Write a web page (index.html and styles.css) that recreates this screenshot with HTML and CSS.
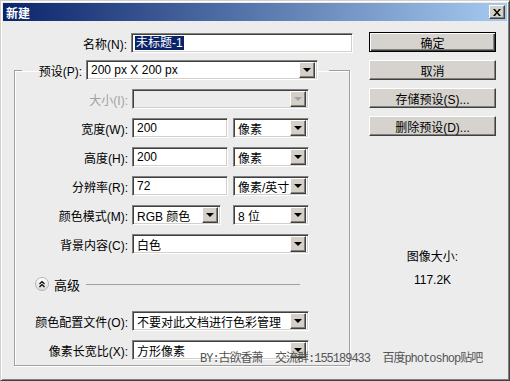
FILE: index.html
```html
<!DOCTYPE html>
<html lang="zh-CN">
<head>
  <meta charset="UTF-8">
  <title>新建</title>
  <link rel="stylesheet" href="styles.css">
</head>
<body>

  <div class="window">
    <!-- 标题栏 -->
    <div class="titlebar">
      <span class="title">新建</span>
      <span class="close">
        <svg width="8" height="7" viewBox="0 0 8 7"><path d="M0 0h2l2 2.5 2-2.5h2l-3 3.5 3 3.5h-2l-2-2.5-2 2.5h-2l3-3.5z" fill="#000"/></svg>
      </span>
    </div>

    <div class="dialog">
      <div class="main">
        <div class="row name-row">
          <label class="lbl">名称(N):</label>
          <div class="field w-name"><span class="sel">未标题-1</span></div>
        </div>

        <fieldset class="group">
          <legend>
            <label class="lbl lbl-preset">预设(P):</label>
            <div class="field select w-preset"><span class="val">200 px X 200 px</span><span class="drop"></span></div>
          </legend>

          <div class="rows">
            <div class="row">
              <label class="lbl disabled">大小(I):</label>
              <div class="field select off w-full"><span class="val"></span><span class="drop"></span></div>
            </div>
            <div class="row">
              <label class="lbl">宽度(W):</label>
              <div class="field w-num"><span class="val">200</span></div>
              <div class="field select w-unit"><span class="val">像素</span><span class="drop"></span></div>
            </div>
            <div class="row">
              <label class="lbl">高度(H):</label>
              <div class="field w-num"><span class="val">200</span></div>
              <div class="field select w-unit"><span class="val">像素</span><span class="drop"></span></div>
            </div>
            <div class="row">
              <label class="lbl">分辨率(R):</label>
              <div class="field w-num"><span class="val">72</span></div>
              <div class="field select w-unit"><span class="val">像素/英寸</span><span class="drop"></span></div>
            </div>
            <div class="row">
              <label class="lbl">颜色模式(M):</label>
              <div class="field select w-mode"><span class="val">RGB 颜色</span><span class="drop"></span></div>
              <div class="field select w-unit gap-wide"><span class="val">8 位</span><span class="drop"></span></div>
            </div>
            <div class="row">
              <label class="lbl">背景内容(C):</label>
              <div class="field select w-full"><span class="val">白色</span><span class="drop"></span></div>
            </div>
          </div>

          <!-- 高级 -->
          <div class="advanced">
            <span class="toggle">
              <svg width="14" height="14" viewBox="0 0 14 14">
                <defs>
                  <linearGradient id="tg" x1="0" y1="0" x2="0" y2="1">
                    <stop offset="0" stop-color="#ffffff"/>
                    <stop offset="1" stop-color="#d8d8d8"/>
                  </linearGradient>
                </defs>
                <circle cx="7" cy="7" r="6.5" fill="url(#tg)" stroke="#b4b4b4"/>
                <path d="M4.5 7l2.5-2.5 2.5 2.5M4.5 10l2.5-2.5 2.5 2.5" fill="none" stroke="#000" stroke-width="1.2"/>
              </svg>
            </span>
            <span class="adv-text">高级</span>
            <span class="adv-line"></span>
          </div>

          <div class="rows">
            <div class="row">
              <label class="lbl">颜色配置文件(O):</label>
              <div class="field select w-full"><span class="val">不要对此文档进行色彩管理</span><span class="drop"></span></div>
            </div>
            <div class="row">
              <label class="lbl">像素长宽比(X):</label>
              <div class="field select w-full"><span class="val">方形像素</span><span class="drop"></span></div>
            </div>
          </div>
        </fieldset>
      </div>

      <div class="side">
        <button class="btn default">确定</button>
        <button class="btn">取消</button>
        <button class="btn">存储预设(S)...</button>
        <button class="btn">删除预设(D)...</button>

        <div class="info">
          <div>图像大小:</div>
          <div class="size">117.2K</div>
        </div>
      </div>
    </div>

    <div class="watermark">BY:古欲香萧  交流群:155189433  百度photoshop贴吧</div>
  </div>

</body>
</html>
```

FILE: styles.css
```css
html, body {
  margin: 0;
  padding: 0;
  background: #ececec;
}

body {
  font-family: "Liberation Sans", "Noto Sans CJK SC", sans-serif;
  font-size: 12px;
  color: #000;
}

/* 窗口外框 */
.window {
  position: relative;
  width: 510px;
  height: 381px;
  box-sizing: border-box;
  background: #ececec;
  border: 1px solid;
  border-color: #d4d0c8 #404040 #404040 #d4d0c8;
  box-shadow: inset 1px 1px #fff, inset -1px -1px #808080;
  padding: 2px;
  display: flex;
  flex-direction: column;
}

/* 标题栏 */
.titlebar {
  height: 18px;
  background: linear-gradient(90deg, #0a246a, #a6caf0);
  display: flex;
  align-items: center;
  padding: 0 2px 0 3px;
}

.title {
  color: #fff;
  font-weight: bold;
  font-size: 12px;
}

.close {
  margin-left: auto;
  width: 16px;
  height: 14px;
  box-sizing: border-box;
  background: #d4d0c8;
  border: 1px solid;
  border-color: #fff #404040 #404040 #fff;
  box-shadow: inset -1px -1px #808080;
  display: flex;
  align-items: center;
  justify-content: center;
}

/* 主体 */
.dialog {
  flex: 1;
  display: flex;
  padding: 12px 0 0 11px;
}

.main {
  width: 340px;
}

.row {
  display: flex;
  align-items: center;
  height: 20px;
}

.lbl {
  width: 113px;
  text-align: right;
  margin-right: 4px;
  white-space: nowrap;
}

.lbl.disabled {
  color: #a0a0a0;
}

/* 输入框 */
.field {
  height: 20px;
  box-sizing: border-box;
  background: #fff;
  border: 1px solid;
  border-color: #808080 #fff #fff #808080;
  box-shadow: inset 1px 1px #404040, inset -1px -1px #d4d0c8;
  display: flex;
  align-items: center;
  padding: 0 2px 0 3px;
  white-space: nowrap;
  overflow: hidden;
}

.field .val {
  padding-left: 1px;
}

.sel {
  background: #0a246a;
  color: #fff;
  padding: 0 1px;
  line-height: 14px;
}

.select .drop {
  margin-left: auto;
  flex: none;
  width: 16px;
  height: 16px;
  box-sizing: border-box;
  background: #d4d0c8;
  border: 1px solid;
  border-color: #fff #404040 #404040 #fff;
  box-shadow: inset -1px -1px #808080;
  position: relative;
}

.select .drop::after {
  content: "";
  position: absolute;
  left: 3px;
  top: 5px;
  border-left: 4px solid transparent;
  border-right: 4px solid transparent;
  border-top: 4px solid #000;
}

.select.off {
  background: #ececec;
}

.select.off .drop::after {
  border-top-color: #a0a0a0;
}

.w-name { width: 222px; }
.w-preset { width: 232px; }
.w-full { width: 177px; }
.w-num { width: 96px; margin-right: 5px; }
.w-unit { width: 76px; }
.w-mode { width: 89px; }
.gap-wide { margin-left: 12px; }

/* 分组框 */
.group {
  margin: 7px 0 0 0;
  width: 336px;
  box-sizing: border-box;
  padding: 9px 0 4px 0;
  border: 1px solid #a0a0a0;
  box-shadow: 1px 1px #fff, inset 1px 1px #fff;
  height: 306px;
}

.group legend {
  margin-left: 7px;
  padding: 0 11px 0 13px;
  display: flex;
  align-items: center;
  height: 20px;
}

.lbl-preset {
  width: 47px;
}

.rows {
  display: flex;
  flex-direction: column;
  gap: 9px;
}

/* 高级 */
.advanced {
  display: flex;
  align-items: center;
  height: 16px;
  margin: 22px 0 19px 20px;
}

.toggle {
  display: flex;
  width: 14px;
  height: 14px;
}

.adv-text {
  margin-left: 5px;
  font-size: 13px;
}

.adv-line {
  margin-left: 6px;
  width: 214px;
  height: 1px;
  background: #a0a0a0;
}

/* 右侧按钮 */
.side {
  margin-left: 15px;
  width: 127px;
  display: flex;
  flex-direction: column;
  gap: 8px;
  padding-top: 0;
  margin-top: -1px;
}

.btn {
  height: 20px;
  width: 127px;
  box-sizing: border-box;
  font-family: inherit;
  font-size: 12px;
  background: #d6d3ce;
  border: 1px solid;
  border-color: #fff #404040 #404040 #fff;
  box-shadow: inset -1px -1px #808080;
  padding: 0;
  color: #000;
}

.btn.default {
  border-color: #000;
  box-shadow: inset 1px 1px #fff, inset -1px -1px #404040, inset -2px -2px #808080;
}

.info {
  margin-top: 105px;
  text-align: center;
  line-height: 16px;
}

.info .size {
  margin-top: 7px;
}

/* 水印 */
.watermark {
  position: absolute;
  left: 199px;
  top: 350px;
  font-family: "Liberation Mono", "Noto Sans CJK SC", monospace;
  font-size: 12px;
  letter-spacing: -1px;
  color: #555;
  white-space: pre;
  line-height: 16px;
}
```
